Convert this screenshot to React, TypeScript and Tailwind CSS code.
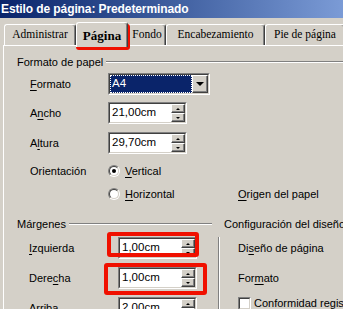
import React from "react";

function Tab({
  label,
  className,
  active = false,
}: {
  label: string;
  className: string;
  active?: boolean;
}) {
  return (
    <div
      className={`flex shrink-0 items-center justify-center whitespace-nowrap rounded-t-[3px] border-l border-r border-t border-l-white border-r-[#404040] border-t-white bg-[#d4d0c8] font-['Liberation_Serif',serif] shadow-[inset_-1px_0_0_#808080] ${
        active
          ? "relative z-10 -mb-[2px] h-[25px] text-[13px] font-bold"
          : "h-[21px] text-[11.5px]"
      } ${className}`}
    >
      {label}
    </div>
  );
}

function Field({ className, children }: { className: string; children: React.ReactNode }) {
  return (
    <div
      className={`flex h-[22px] shrink-0 border border-b-white border-l-[#808080] border-r-white border-t-[#808080] ${className}`}
    >
      <div className="flex flex-1 border border-b-[#d4d0c8] border-l-[#404040] border-r-[#d4d0c8] border-t-[#404040] bg-white">
        {children}
      </div>
    </div>
  );
}

function Raised({ className, children }: { className: string; children?: React.ReactNode }) {
  return (
    <div
      className={`flex items-center justify-center border border-b-[#404040] border-l-white border-r-[#404040] border-t-white bg-[#d4d0c8] shadow-[inset_-1px_-1px_0_#808080] ${className}`}
    >
      {children}
    </div>
  );
}

function SpinField({ value }: { value: string }) {
  return (
    <Field className="w-[79px]">
      <div className="flex flex-1 items-center pl-[2px] text-[11.5px]">{value}</div>
      <div className="flex w-[14px] flex-col">
        <Raised className="flex-1">
          <div className="h-0 w-0 border-x-[2px] border-b-[2px] border-x-transparent border-b-black" />
        </Raised>
        <Raised className="flex-1">
          <div className="h-0 w-0 border-x-[2px] border-t-[2px] border-x-transparent border-t-black" />
        </Raised>
      </div>
    </Field>
  );
}

function Radio({ checked = false }: { checked?: boolean }) {
  return (
    <div className="h-[12px] w-[12px] shrink-0 rounded-full border border-b-white border-l-[#808080] border-r-white border-t-[#808080]">
      <div className="flex h-full w-full items-center justify-center rounded-full border border-b-[#d4d0c8] border-l-[#404040] border-r-[#d4d0c8] border-t-[#404040] bg-white">
        {checked && <div className="h-[4px] w-[4px] rounded-full bg-black" />}
      </div>
    </div>
  );
}

function Etched() {
  return <div className="ml-[3px] h-[2px] flex-1 border-b border-t border-b-white border-t-[#808080]" />;
}

function U({ children }: { children: React.ReactNode }) {
  return <span className="underline underline-offset-[2px]">{children}</span>;
}

export default function App() {
  return (
    <div className="relative h-[309px] w-[343px] overflow-hidden bg-[#d4d0c8] font-['Liberation_Sans',sans-serif] text-[11px] leading-none text-black">
      {/* Title bar */}
      <div className="flex h-[18px] items-center whitespace-nowrap bg-linear-to-r from-[#0a246a] to-[#7b9bd6] pl-[1px] text-[12px] font-bold tracking-[-0.1px] text-white">
        Estilo de página: Predeterminado
      </div>

      {/* Tabs */}
      <div className="flex h-[27px] items-end pl-[4px]">
        <Tab label="Administrar" className="w-[72px]" />
        <Tab label="Página" className="w-[52px]" active />
        <Tab label="Fondo" className="w-[38px]" />
        <Tab label="Encabezamiento" className="w-[99px]" />
        <Tab label="Pie de página" className="w-[80px]" />
      </div>

      {/* Panel */}
      <div className="ml-[3px] h-[300px] border-l border-t border-white">
        <div className="mt-[9px] flex h-[14px] items-center pl-[13px]">
          <span className="whitespace-nowrap">Formato de papel</span>
          <Etched />
        </div>

        <div className="mt-[4px] flex h-[22px] items-center">
          <div className="w-[104px] shrink-0 pl-[26px]">
            <U>F</U>ormato
          </div>
          <Field className="w-[102px]">
            <div className="flex flex-1 items-center border border-dotted border-white bg-[#0a246a] pl-[1px] text-[11.5px] text-white">
              A4
            </div>
            <Raised className="w-[16px]">
              <div className="h-0 w-0 border-x-[4px] border-t-[4px] border-x-transparent border-t-black" />
            </Raised>
          </Field>
        </div>

        <div className="mt-[7px] flex h-[22px] items-center">
          <div className="w-[104px] shrink-0 pl-[26px]">
            A<U>n</U>cho
          </div>
          <SpinField value="21,00cm" />
        </div>

        <div className="mt-[8px] flex h-[22px] items-center">
          <div className="w-[104px] shrink-0 pl-[26px]">
            A<U>l</U>tura
          </div>
          <SpinField value="29,70cm" />
        </div>

        <div className="mt-[10px] flex h-[14px] items-center">
          <div className="w-[104px] shrink-0 pl-[26px]">Orientación</div>
          <Radio checked />
          <span className="ml-[5px]">
            <U>V</U>ertical
          </span>
        </div>

        <div className="mt-[9px] flex h-[14px] items-center pl-[104px]">
          <div className="flex w-[130px] shrink-0 items-center">
            <Radio />
            <span className="ml-[5px]">
              <U>H</U>orizontal
            </span>
          </div>
          <span className="whitespace-nowrap">
            <U>O</U>rigen del papel
          </span>
        </div>

        {/* Márgenes + Configuración del diseño */}
        <div className="mt-[16px] flex">
          <div className="w-[208px] shrink-0">
            <div className="flex h-[14px] items-center pl-[13px]">
              <span>Márgenes</span>
              <Etched />
            </div>
            <div className="mt-[6px] flex h-[22px] items-center">
              <div className="w-[114px] shrink-0 pl-[25px]">
                <U>I</U>zquierda
              </div>
              <SpinField value="1,00cm" />
            </div>
            <div className="mt-[8px] flex h-[22px] items-center">
              <div className="w-[114px] shrink-0 pl-[25px]">
                Dere<U>c</U>ha
              </div>
              <SpinField value="1,00cm" />
            </div>
            <div className="mt-[8px] flex h-[22px] items-center">
              <div className="w-[114px] shrink-0 pl-[25px]">
                <U>A</U>rriba
              </div>
              <SpinField value="2,00cm" />
            </div>
          </div>

          <div className="flex-1">
            <div className="flex h-[14px] items-center whitespace-nowrap pl-[12px]">
              Configuración del diseño
            </div>
            <div className="ml-[6px] mt-[6px] h-[90px] border-l border-l-[#808080] pl-[19px] shadow-[inset_1px_0_0_#ffffff]">
              <div className="flex h-[22px] items-center whitespace-nowrap">
                Di<U>s</U>eño de página
              </div>
              <div className="mt-[8px] flex h-[22px] items-center">
                For<U>m</U>ato
              </div>
              <div className="mt-[8px] flex h-[13px] items-center whitespace-nowrap">
                <div className="h-[13px] w-[13px] shrink-0 border border-b-white border-l-[#808080] border-r-white border-t-[#808080]">
                  <div className="h-full w-full border border-b-[#d4d0c8] border-l-[#404040] border-r-[#d4d0c8] border-t-[#404040] bg-white" />
                </div>
                <span className="ml-[3px]">Conformidad registro</span>
              </div>
            </div>
          </div>
        </div>
      </div>

      {/* Red highlight annotations */}
      <div className="pointer-events-none absolute left-[76px] top-[24px] h-[26px] w-[54px] rounded-[3px] border-4 border-[#f01000]" />
      <div className="pointer-events-none absolute left-[107px] top-[232px] h-[25px] w-[92px] rounded-[3px] border-4 border-[#f01000]" />
      <div className="pointer-events-none absolute left-[104px] top-[263px] h-[32px] w-[103px] rounded-[3px] border-4 border-[#f01000]" />
    </div>
  );
}
